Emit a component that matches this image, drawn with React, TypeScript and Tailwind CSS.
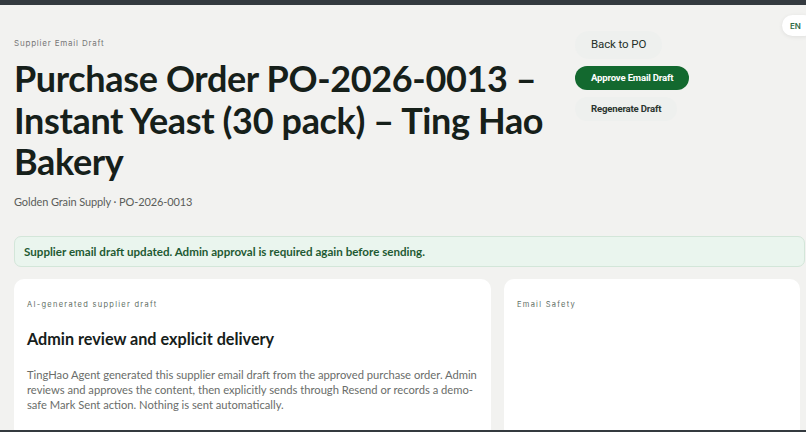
const sans = "font-['Lato','Liberation_Sans',sans-serif]";
const btn = "font-['Roboto','Inter',sans-serif]";
const label = "font-['Inter','Liberation_Sans',sans-serif]";

export default function App() {
  return (
    <div className={`relative min-h-[432px] w-full overflow-hidden bg-[#f2f2f0] ${sans}`}>
      <div className="h-[5px] bg-[#343a3f]" />

      <button
        type="button"
        className={`absolute right-[-8px] top-[15px] flex h-[21px] w-[32px] items-center justify-start rounded-full bg-white pl-[8px] text-[8px] font-semibold text-[#2f6a47] shadow-[0_1px_4px_rgba(0,0,0,0.08)] ${label}`}
      >
        EN
      </button>

      <div className="pl-[14px] pr-[1px] pt-[32px]">
        <div className="flex items-start">
          <div className="w-[561px] shrink-0 pr-[10px]">
            <p className={`text-[8px] tracking-[0.1em] text-[#777] ${label}`}>Supplier Email Draft</p>
            <h1 className="mt-[9px] text-[36px] font-bold leading-[41.5px] tracking-[-0.01em] text-[#16201a]">
              Purchase Order PO-2026-0013 – Instant Yeast (30 pack) – Ting Hao Bakery
            </h1>
            <p className="mt-[11px] text-[11px] tracking-[-0.01em] text-[#5a5d5a]">
              Golden Grain Supply · PO-2026-0013
            </p>
          </div>

          <div className={`-mt-[6px] flex flex-col items-start gap-[7px] whitespace-nowrap ${btn}`}>
            <button
              type="button"
              className="flex h-[28px] items-center rounded-full bg-[#eef0ee] px-[16px] text-[11.5px] tracking-[-0.01em] text-[#25302a]"
            >
              Back to PO
            </button>
            <button
              type="button"
              className="flex h-[24px] items-center rounded-full bg-[#13692f] px-[16px] text-[9.6px] font-bold tracking-[-0.02em] text-white"
            >
              Approve Email Draft
            </button>
            <button
              type="button"
              className="flex h-[24px] items-center rounded-full bg-[#eef0ee] px-[16px] text-[9.6px] font-bold tracking-[-0.02em] text-[#2b3530]"
            >
              Regenerate Draft
            </button>
          </div>
        </div>

        <div className="mt-[26px] flex h-[31px] items-center rounded-[7px] border border-[#d3e6d9] bg-[#eaf5ee] px-[9px] text-[11.6px] font-bold text-[#1f5a33]">
          Supplier email draft updated. Admin approval is required again before sending.
        </div>

        <div className="mt-[12px] flex gap-[13px]">
          <section className="h-[160px] w-[477px] shrink-0 rounded-[10px] bg-white px-[13px] pt-[20px]">
            <p className={`text-[7.5px] tracking-[0.17em] text-[#5e6d63] ${label}`}>AI-generated supplier draft</p>
            <h2 className="mt-[17px] text-[16.2px] font-bold text-[#16201a]">
              Admin review and explicit delivery
            </h2>
            <p className="mt-[15px] text-[11.2px] leading-[15px] text-[#6a6d6a]">
              TingHao Agent generated this supplier email draft from the approved purchase order. Admin reviews and
              approves the content, then explicitly sends through Resend or records a demo-safe Mark Sent action.
              Nothing is sent automatically.
            </p>
          </section>

          <section className="h-[160px] w-[296px] shrink-0 rounded-[10px] bg-white px-[13px] pt-[20px]">
            <p className={`text-[7.5px] tracking-[0.17em] text-[#5e6d63] ${label}`}>Email Safety</p>
          </section>
        </div>
      </div>

      <div className="fixed bottom-0 left-0 h-[2px] w-full bg-[#343a3f]" />
    </div>
  );
}
